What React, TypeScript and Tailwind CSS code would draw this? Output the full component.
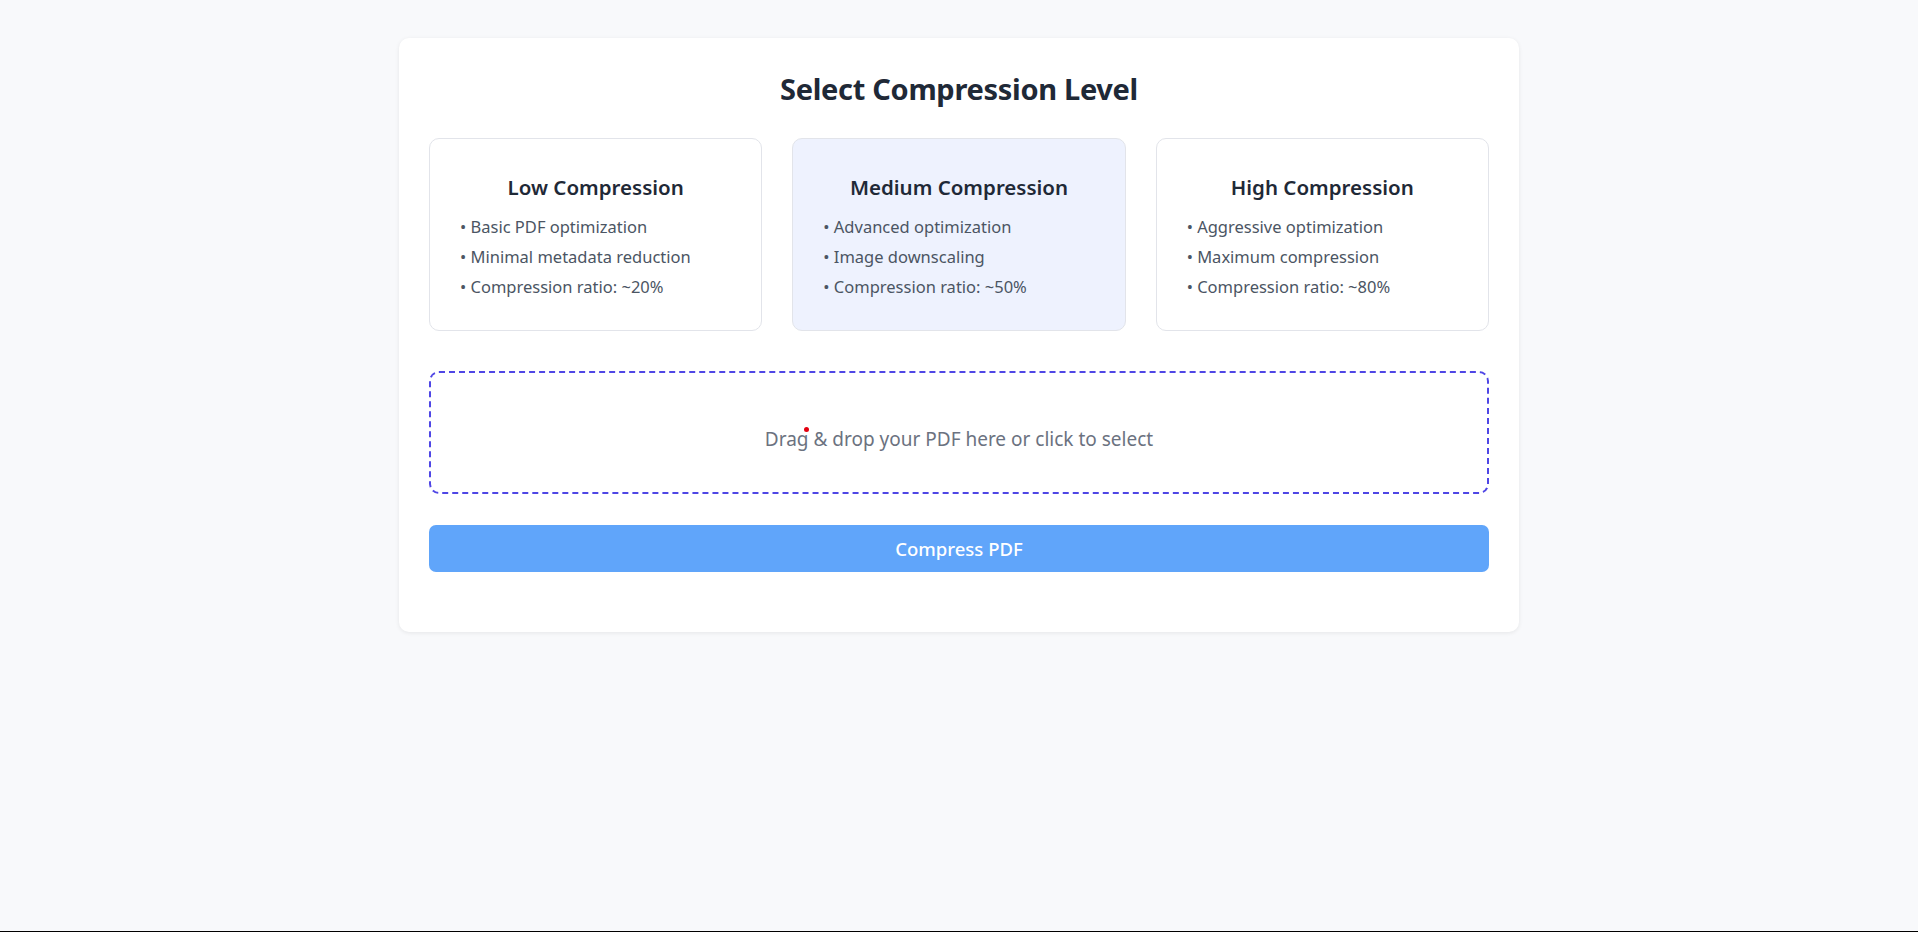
import React, { useState } from 'react';

type Level = {
  id: string;
  title: string;
  points: string[];
};

const levels: Level[] = [
  {
    id: 'low',
    title: 'Low Compression',
    points: ['Basic PDF optimization', 'Minimal metadata reduction', 'Compression ratio: ~20%'],
  },
  {
    id: 'medium',
    title: 'Medium Compression',
    points: ['Advanced optimization', 'Image downscaling', 'Compression ratio: ~50%'],
  },
  {
    id: 'high',
    title: 'High Compression',
    points: ['Aggressive optimization', 'Maximum compression', 'Compression ratio: ~80%'],
  },
];

export default function App() {
  const [selected, setSelected] = useState('medium');

  return (
    <div className="h-[932px] flex flex-col bg-[#f8f9fb] font-['Noto_Sans',sans-serif]">
      <div className="flex-1 pt-[38px]">
        <div className="w-[1120px] mx-auto bg-white rounded-[10px] shadow-[0_1px_4px_rgba(0,0,0,0.08)] px-[30px] pt-[33px] pb-[60px]">
          <h2 className="text-[29px] leading-[36px] font-bold text-[#1f2937] text-center tracking-[-0.3px]">
            Select Compression Level
          </h2>

          {/* Kartlar */}
          <div className="grid grid-cols-3 gap-[30px] mt-[31px]">
            {levels.map((level) => (
              <button
                key={level.id}
                onClick={() => setSelected(level.id)}
                className={`text-left rounded-[10px] border border-[#e2e4ea] px-[30px] pt-[34px] pb-[31px] ${
                  selected === level.id ? 'bg-[#eef2fe]' : 'bg-white'
                }`}
              >
                <h3 className="text-[20.5px] leading-[28px] font-semibold text-[#1f2937] text-center mb-[14px]">
                  {level.title}
                </h3>
                <ul className="space-y-[6px] text-[16.5px] leading-[24px] text-[#4b5563]">
                  {level.points.map((p) => (
                    <li key={p}>• {p}</li>
                  ))}
                </ul>
              </button>
            ))}
          </div>

          {/* Dosya bırakma alanı */}
          <div className="mt-[40px] border-2 border-dashed border-[#4f46e5] rounded-[10px] h-[123px] flex items-center justify-center">
            <p className="relative text-[19px] leading-[28px] text-[#6b7280] pt-[12px]">
              <span className="absolute left-[39px] top-[14px] w-[5px] h-[5px] rounded-full bg-[#e3000f]" />
              Drag &amp; drop your PDF here or click to select
            </p>
          </div>

          <button className="mt-[31px] w-full h-[47px] rounded-[7px] bg-[#60a5fa] text-white text-[18.5px] font-medium">
            Compress PDF
          </button>
        </div>
      </div>
      <div className="h-px bg-black" />
    </div>
  );
}
